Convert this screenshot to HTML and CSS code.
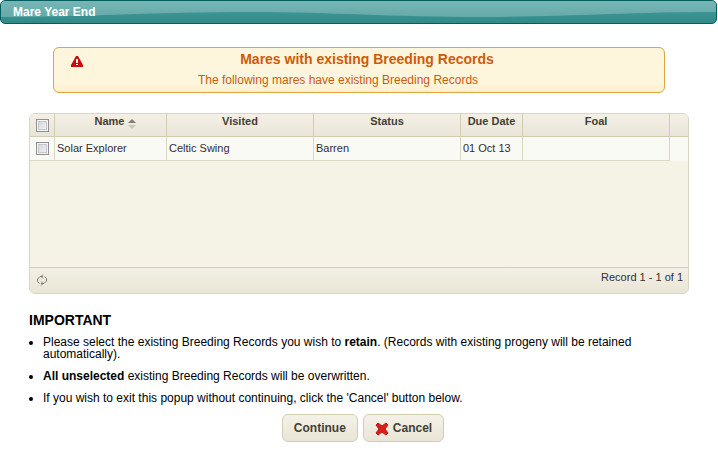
FILE: index.html
```html
<!DOCTYPE html>
<html lang="en">
<head>
  <meta charset="UTF-8">
  <title>Mare Year End</title>
  <meta name="viewport" content="width=device-width, initial-scale=1">
  <link rel="stylesheet" href="styles.css">
</head>
<body>
  <header class="titlebar">
    <svg class="wave" viewBox="0 0 716 22" preserveAspectRatio="none" aria-hidden="true">
      <path d="M0 0H716V11C630 11 560 16 480 16C390 16 330 11 250 11C150 11 90 16 0 16Z" fill="#fff" fill-opacity="0.24"/>
    </svg>
    <h1>Mare Year End</h1>
  </header>

  <div class="notice">
    <svg class="warn" width="12" height="11" viewBox="0 0 12 11" aria-hidden="true">
      <path d="M5 0H7L12 9V11H0V9Z" fill="#cd0a0a"/>
      <path d="M5 3H7V7H5ZM5 8H7V9H5Z" fill="#fff"/>
    </svg>
    <h2>Mares with existing Breeding Records</h2>
    <p>The following mares have existing Breeding Records</p>
  </div>

  <div class="grid">
    <div class="grid-body">
      <table>
        <colgroup>
          <col class="c-check"><col class="c-name"><col class="c-wide"><col class="c-wide"><col class="c-date"><col class="c-wide"><col>
        </colgroup>
        <thead>
          <tr>
            <th class="check"><input type="checkbox" aria-label="Select all"></th>
            <th class="sorted">Name<svg class="sort" width="8" height="10" viewBox="0 0 8 10" aria-hidden="true">
                <path d="M4 0L8 4H0Z" fill="#847e71"/>
                <path d="M0 6H8L4 10Z" fill="#c9c5b8"/>
              </svg>
            </th>
            <th>Visited</th>
            <th>Status</th>
            <th>Due Date</th>
            <th>Foal</th>
            <td class="filler"></td>
          </tr>
        </thead>
        <tbody>
          <tr>
            <td class="check"><input type="checkbox" aria-label="Select Solar Explorer"></td>
            <td>Solar Explorer</td>
            <td>Celtic Swing</td>
            <td>Barren</td>
            <td>01 Oct 13</td>
            <td></td>
            <td class="filler"></td>
          </tr>
        </tbody>
      </table>
    </div>
    <div class="pager">
      <button type="button" class="refresh" aria-label="Refresh">
        <svg width="10" height="12" viewBox="0 0 10 12" fill="none" stroke="#847e71" aria-hidden="true">
          <path d="M2.5 9.5L.5 7.5V5L3 2.5H6M6 .5L4 2.5L6 4.5"/>
          <path d="M7.5 2.5L9.5 4.5V7L7 9.5H4M4 7.5L6 9.5L4 11.5"/>
        </svg>
      </button>
      <span class="count">Record 1 - 1 of 1</span>
    </div>
  </div>

  <section class="info">
    <h2>IMPORTANT</h2>
    <ul>
      <li>Please select the existing Breeding Records you wish to <b>retain</b>. (Records with existing progeny will be retained automatically).</li>
      <li><b>All unselected</b> existing Breeding Records will be overwritten.</li>
      <li>If you wish to exit this popup without continuing, click the 'Cancel' button below.</li>
    </ul>
  </section>

  <div class="actions">
    <button type="button" class="btn">Continue</button>
    <button type="button" class="btn">
      <svg width="14" height="14" viewBox="0 0 14 14" aria-hidden="true">
        <path d="M3 1L7 4L11 1L13 3L10 7L13 11L11 13L7 10L3 13L1 11L4 7L1 3Z" fill="#d8211f" stroke="#c11212" stroke-linejoin="round"/>
      </svg>
      Cancel
    </button>
  </div>
</body>
</html>
```

FILE: styles.css
```css
* { box-sizing: border-box; }
body {
  font-family: Arial, "Liberation Sans", sans-serif;
  font-size: 12px;
  line-height: 12px;
  color: #000;
  background: #fff;
  margin: 0;
}
h1, h2, p, ul {
  margin: 0;
  padding: 0;
}

.titlebar {
  position: relative;
  height: 24px;
  margin-right: 1px;
  padding: 0 12px;
  border: 1px solid #045e5e;
  border-radius: 5px;
  background: linear-gradient(#4c9f9f, #2f8a88);
  overflow: hidden;
}
.titlebar h1 {
  position: relative;
  font-size: 12px;
  line-height: 22px;
  color: #fff;
}
.wave {
  position: absolute;
  top: 0;
  left: 0;
  width: 100%;
  height: 100%;
}

.notice {
  position: relative;
  height: 46px;
  margin: 23px 53px 20px;
  padding-top: 4px;
  border: 1px solid #e0a440;
  border-radius: 6px;
  background: linear-gradient(#fdf5dc 80%, #fdf0cc);
  color: #cd5c0a;
  text-align: center;
}
.notice h2 {
  padding-left: 16px;
  font-size: 14px;
  line-height: 14px;
}
.notice p {
  padding-top: 7px;
  padding-right: 42px;
  line-height: 14px;
}
.warn {
  position: absolute;
  top: 8px;
  left: 17px;
}

.grid {
  margin: 0 29px;
  border: 1px solid #d9d6c4;
  border-radius: 6px;
  background: #f4f3e6;
  color: #362b36;
  font-size: 11px;
  overflow: hidden;
}
.grid-body {
  height: 153px;
  background: #f4f3e6;
}
.grid table {
  width: 100%;
  table-layout: fixed;
  border-collapse: separate;
  border-spacing: 0;
}
.c-check { width: 25px; }
.c-name { width: 112px; }
.c-wide { width: 147px; }
.c-date { width: 62px; }
.grid th,
.grid thead td {
  height: 23px;
  padding: 0 2px;
  border-right: 1px solid #d4ccb0;
  border-bottom: 1px solid #d4ccb0;
  background: linear-gradient(#f4f0e5, #e9e5d8);
  color: #433f38;
  line-height: 14px;
  vertical-align: top;
}
.grid tbody td {
  height: 24px;
  padding: 0 2px 1px;
  border-right: 1px solid #dcd7c0;
  border-bottom: 1px solid #dcd7c0;
  background: #f9faf4;
}
.grid .sorted { padding-left: 12px; }
.grid .check {
  padding: 0;
  text-align: center;
  vertical-align: middle;
}
.grid td.filler { border-right: 0; }
.grid tbody td.filler { border-bottom: 0; }
.grid input {
  appearance: none;
  display: block;
  width: 13px;
  height: 13px;
  margin: 0 auto;
  border: 1px solid #8e8f8f;
  background: linear-gradient(135deg, #cfd1d6, #f6f6f6);
  box-shadow: inset 0 0 0 1px #f4f4f4, inset 0 0 0 2px #c6c8d0;
}
.sort {
  margin-left: 4px;
  vertical-align: -4px;
}
.pager {
  display: flex;
  justify-content: space-between;
  align-items: flex-start;
  height: 26px;
  padding: 0 5px 0 7px;
  border-top: 1px solid #d4ccb0;
  background: linear-gradient(#f3f0e5, #e9e5d6);
}
.refresh {
  display: flex;
  margin-top: 6px;
  padding: 0;
  border: 0;
  background: none;
  cursor: pointer;
}
.count { line-height: 18px; }

.info { margin: 19px 29px 0; }
.info h2 {
  font-size: 14px;
  line-height: 14px;
}
.info ul {
  margin-top: 9px;
  padding-left: 14px;
}
.info li { margin-bottom: 10px; }

.actions {
  display: flex;
  justify-content: center;
  align-items: flex-start;
  gap: 5px;
  padding-right: 8px;
  padding-left: 16px;
}
.btn {
  display: flex;
  align-items: center;
  gap: 4px;
  height: 28px;
  padding: 0 11px;
  border: 1px solid #d4ccb0;
  border-radius: 6px;
  background: linear-gradient(#f4f1e8, #e9e5d6);
  color: #433f38;
  font: bold 12px Arial, "Liberation Sans", sans-serif;
  cursor: pointer;
}
.btn svg { margin-top: 2px; }
```
